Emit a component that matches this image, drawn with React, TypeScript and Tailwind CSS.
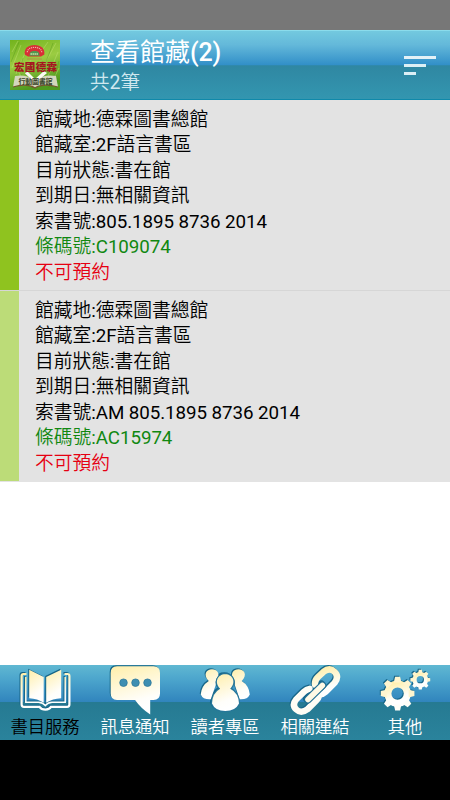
import type { ReactNode } from "react";

type Holding = {
  accent: string;
  lines: string[];
  barcode: string;
  status: string;
};

const HOLDINGS: Holding[] = [
  {
    accent: "bg-[#8fc31f]",
    lines: [
      "館藏地:德霖圖書總館",
      "館藏室:2F語言書區",
      "目前狀態:書在館",
      "到期日:無相關資訊",
      "索書號:805.1895 8736 2014",
    ],
    barcode: "條碼號:C109074",
    status: "不可預約",
  },
  {
    accent: "bg-[#bcdc78]",
    lines: [
      "館藏地:德霖圖書總館",
      "館藏室:2F語言書區",
      "目前狀態:書在館",
      "到期日:無相關資訊",
      "索書號:AM 805.1895 8736 2014",
    ],
    barcode: "條碼號:AC15974",
    status: "不可預約",
  },
];

// Latin runs keep the regular weight, Chinese runs are set lighter
function Mixed({ text }: { text: string }) {
  return text.split(/([\x20-\x7e]+)/).map((run, i) => (
    <span key={i} className={i % 2 === 1 ? "font-normal tracking-[-0.06px]" : "font-[350]"}>
      {run}
    </span>
  ));
}

function Logo() {
  return (
    <svg width="50" height="50" viewBox="0 0 50 50" className="block">
      <defs>
        <linearGradient id="grass" x1="0" y1="0" x2="0.3" y2="1">
          <stop offset="0" stopColor="#72b31d" />
          <stop offset="0.5" stopColor="#9bcc42" />
          <stop offset="1" stopColor="#4f9a20" />
        </linearGradient>
      </defs>
      <rect width="50" height="50" fill="url(#grass)" />
      <g fill="none" stroke="#c4e275" strokeWidth="0.9" opacity="0.5">
        <path d="M2 28 11 5M6 34 15 13M12 40 5 22M33 27 46 3M38 36 48 12M31 12 38 2M2 12 8 1M43 40 49 28M17 27 21 20" />
      </g>
      <g fill="none" stroke="#488b15" strokeWidth="1" opacity="0.35">
        <path d="M1 22 9 2M10 28 13 18M36 22 43 3M45 35 49 21M4 46 12 34M38 48 48 38" />
      </g>
      <path d="M14.7 14.5C14 8.5 18 5 24.5 5S35 8.5 34.3 14.5L31 16.5H18Z" fill="#d92f36" />
      <path d="M17.3 12.2C17.5 9.3 20 7.4 24.5 7.4S31.5 9.3 31.7 12.2" fill="none" stroke="#efb0a4" strokeWidth="1.2" strokeDasharray="1.2 0.8" />
      <path d="M19.5 15.8C19.5 12 21 11 24.5 11S29.5 12 29.5 15.8Z" fill="#4f9850" />
      <path d="M20.5 14H28.5" stroke="#d7e6b0" strokeWidth="1.3" strokeDasharray="1.4 0.6" />
      <path d="M17 19H32" stroke="#bd6c48" strokeWidth="1" opacity="0.6" />
      <path d="M5 36Q16 34 25 40 34 34 46 36L48 47Q33 43 25 48 17 43 3 47Z" fill="#d3d6bd" />
      <path d="M17 31 25 39 34 31 37 33 25.5 43 15 33.5Z" fill="#fafbf3" />
      <path d="M3 47Q17 43 25 48 33 43 48 47" fill="none" stroke="#73572e" strokeWidth="1.2" />
      <text x="4" y="31" fontSize="10.5" fontWeight="900" fill="#a51520" textLength="43">
        宏國德霖
      </text>
      <text x="8.5" y="43.5" fontSize="7" fontWeight="700" fill="#374328" textLength="34">
        行動圖書館
      </text>
    </svg>
  );
}

function NavIcon({ children }: { children: ReactNode }) {
  return (
    <svg width="56" height="50" viewBox="0 0 56 50" className="block drop-shadow-[-1px_-1px_0.5px_#176688]">
      {children}
    </svg>
  );
}

function BookIcon() {
  return (
    <NavIcon>
      <path
        d="M9.5 9H6.5Q4.6 9 4.6 11V39.5Q4.6 41.8 7 41.8H22.5Q24.3 44.6 28.5 44.6T34 41.8H50Q52.4 41.8 52.4 39.5V11Q52.4 9 50.5 9H47.5"
        fill="none"
        stroke="url(#cream)"
        strokeWidth="2.2"
      />
      <path d="M8.8 12V37.2H21.5Q26 37.5 28.3 40.5 30.5 37.5 35 37.2H48.2V12" fill="none" stroke="url(#cream)" strokeWidth="1.5" />
      <path d="M12.2 4.8 26.7 12V37.8Q20.5 33.6 12.2 33.3Z" fill="url(#cream)" />
      <path d="M44.2 4.8 29.2 12V37.8Q35.5 33.6 44.2 33.3Z" fill="url(#cream)" />
    </NavIcon>
  );
}

function ChatIcon() {
  return (
    <NavIcon>
      <path d="M10 1.3H46.5Q53 1.3 53 8V28.5Q53 35 46.5 35H43.2V49.5Q34 43.5 28 35H10Q3.7 35 3.7 28.5V8Q3.7 1.3 10 1.3Z" fill="url(#cream)" />
      <g fill="#3e8eb2" stroke="#287497" strokeWidth="0.7">
        <circle cx="16.5" cy="17.7" r="3.8" />
        <circle cx="28.5" cy="17.7" r="3.8" />
        <circle cx="40.5" cy="17.7" r="3.8" />
      </g>
    </NavIcon>
  );
}

function ReadersIcon() {
  return (
    <NavIcon>
      <path
        d="M11.8 16C5.5 9.5 9.5 4.2 15 4.2S22 8.5 21.3 11Q18 14.5 18.7 20L13.8 34.3Q6 34.8 3.7 29.5 4.5 20.5 11.8 16Z"
        fill="url(#cream)"
      />
      <path
        d="M44.7 16C51 9.5 47 4.2 41.5 4.2S34.5 8.5 35.2 11Q38.5 14.5 37.8 20L42.7 34.3Q50.5 34.8 52.8 29.5 52 20.5 44.7 16Z"
        fill="url(#cream)"
      />
      <path
        d="M23.2 23.8C16.8 17.5 20.5 9.3 28.2 9.3S39.6 17.5 33.2 23.8Q41.5 28 42 38.5 38.5 46 28.3 46T15 38.5Q15.5 28 23.2 23.8Z"
        fill="url(#cream)"
        stroke="#27779a"
        strokeWidth="2.2"
        paintOrder="stroke"
      />
    </NavIcon>
  );
}

function LinkIcon() {
  return (
    <NavIcon>
      <g fill="none" strokeWidth="6.4" strokeLinecap="round">
        <path
          d="M28 19.5Q27.5 15.5 31 12L36.5 6.8Q42.5 2 47.5 6.8T47.5 18L38.5 27Q36 29.3 33.5 29.3"
          stroke="url(#cream)"
        />
        <path
          d="M22.5 23.8Q19.5 24.2 17 26.7L9.3 34.3Q4.5 40 9.3 44.5T20.5 44.2L29.5 35.3Q31.3 33.5 31.7 31.5"
          stroke="#fffdf5"
        />
        <path d="M21 34.5 35.3 20.5" stroke="#216f93" strokeWidth="8" />
        <path d="M21 34.5 35.3 20.5" stroke="#fff9e5" strokeWidth="5.6" />
      </g>
    </NavIcon>
  );
}

const TEETH = [0, 45, 90, 135, 180, 225, 270, 315];

function Gear({ x, y, scale }: { x: number; y: number; scale: number }) {
  return (
    <g transform={`translate(${x} ${y}) scale(${scale})`}>
      <circle r="9.7" fill="none" stroke="url(#cream)" strokeWidth="7" />
      {TEETH.map((angle) => (
        <path
          key={angle}
          d="M-3.8-11 -2.5-16.8H2.5L3.8-11Z"
          fill={angle > 90 && angle < 270 ? "#fffef8" : "#fff5cf"}
          transform={`rotate(${angle})`}
        />
      ))}
    </g>
  );
}

function GearsIcon() {
  return (
    <NavIcon>
      <Gear x={20.6} y={28.6} scale={1} />
      <Gear x={43.3} y={14.7} scale={0.59} />
    </NavIcon>
  );
}

const TABS = [
  { label: "書目服務", icon: <BookIcon />, color: "text-black" },
  { label: "訊息通知", icon: <ChatIcon />, color: "text-white" },
  { label: "讀者專區", icon: <ReadersIcon />, color: "text-white" },
  { label: "相關連結", icon: <LinkIcon />, color: "text-white" },
  { label: "其他", icon: <GearsIcon />, color: "text-white" },
];

export default function App() {
  return (
    <div className="flex h-[800px] w-[450px] flex-col overflow-hidden bg-white font-[Roboto,'Noto_Sans_CJK_TC',sans-serif]">
      {/* Shared icon fill */}
      <svg width="0" height="0" className="absolute">
        <defs>
          <linearGradient id="cream" x1="0" y1="0" x2="0.3" y2="1">
            <stop offset="0" stopColor="#ffefaa" />
            <stop offset="0.8" stopColor="#fffefa" />
            <stop offset="1" stopColor="#fff" />
          </linearGradient>
        </defs>
      </svg>

      <div className="h-[30px] shrink-0 bg-[#777777]" />

      <header className="flex h-[70px] shrink-0 items-center border-t border-b border-t-[#8bdcec] border-b-[#1089aa] bg-[linear-gradient(to_bottom,#73c9df_0%,#64b9da_20%,#318fc8_50%,#2f87a2_51%,#3396b0_100%)] pr-[14px] pl-[10px]">
        <Logo />
        <div className="ml-[30px] flex flex-1 flex-col pt-1">
          <h1 className="h-[31px] text-[25px] leading-[31px] font-normal text-white">
            查看館藏<span className="font-medium tracking-[-0.2px]">(2)</span>
          </h1>
          <p className="h-[29px] text-[19.5px] leading-[29px] text-[#d0e8ef]">
            <Mixed text="共2筆" />
          </p>
        </div>
        <div className="flex w-8 flex-col gap-[5px]">
          <span className="h-[3px] w-8 bg-[#e3f1f7]" />
          <span className="h-[3px] w-[22px] bg-[#dceff5]" />
          <span className="h-[3px] w-3 bg-[#dceff5]" />
        </div>
      </header>

      <main className="flex-1 bg-white">
        {HOLDINGS.map((item) => (
          <article key={item.barcode} className="flex h-[191px] border-b border-[#d6d6d6] bg-[#e3e3e3] last:border-[#e3e3e3]">
            <div className={`w-[19px] shrink-0 ${item.accent}`} />
            <div className="pt-2 pl-4 text-[18.75px] leading-[25.45px] text-black">
              {item.lines.map((line) => (
                <p key={line}>
                  <Mixed text={line} />
                </p>
              ))}
              <p className="text-[#118811]">
                <Mixed text={item.barcode} />
              </p>
              <p className="text-[#e60012]">
                <Mixed text={item.status} />
              </p>
            </div>
          </article>
        ))}
      </main>

      <nav className="grid h-[75px] shrink-0 grid-cols-5 bg-[linear-gradient(to_bottom,#60b8d2_0%,#4ba4cc_20%,#3185bd_49%,#267a92_50%,#2a839c_100%)]">
        {TABS.map((tab) => (
          <button key={tab.label} className="flex flex-col items-center">
            {tab.icon}
            <span className={`text-[17.3px] leading-[25px] ${tab.color}`}>
              <Mixed text={tab.label} />
            </span>
          </button>
        ))}
      </nav>

      <div className="h-[60px] shrink-0 bg-black" />
    </div>
  );
}
